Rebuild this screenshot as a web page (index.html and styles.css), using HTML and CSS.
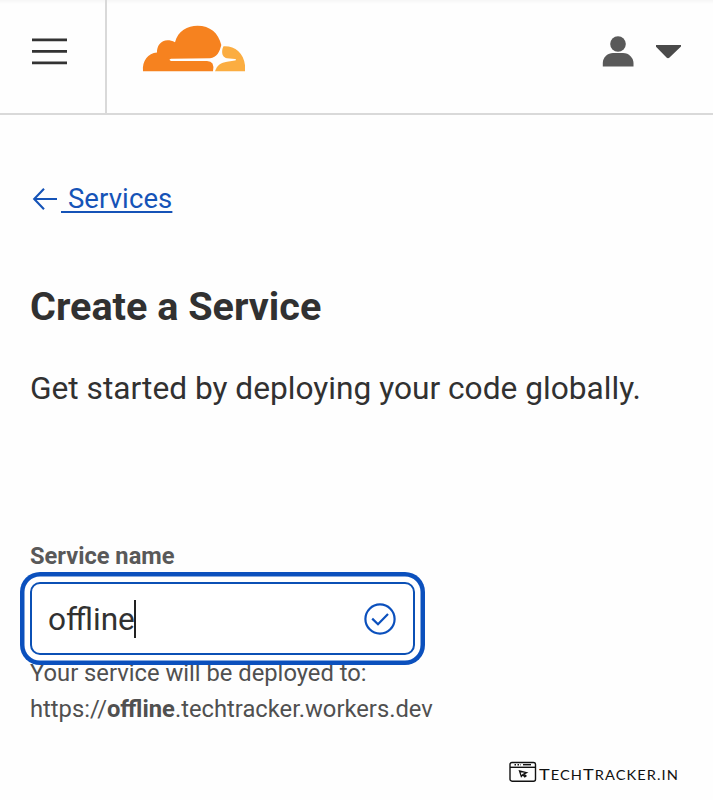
FILE: index.html
```html
<!DOCTYPE html>
<html lang="en">
<head>
<meta charset="utf-8">
<title>Create a Service</title>
<link rel="stylesheet" href="styles.css">
</head>
<body>
<header class="topbar">
  <div class="menu"><svg width="36" height="28" viewBox="0 0 36 28" stroke="#333" stroke-width="2.700"><path d="M0 1.900H35M0 13.300H35M0 24.900H35"/></svg></div>
  <svg class="logo" width="103" height="47" viewBox="142 25 103 47">
    <path fill="#f6821f" d="M143 71.300C142 61 148 53 157 52.500C156.500 44 164 36.500 175 42.200C178 31 187.500 25.800 197.500 25.800C210 25.800 218.500 33 221.300 45C219.500 52 217 57.500 210 58.200L171 58.800Q168 59.700 171 60.900L207 61Q215 61 213 71.300Z"/>
    <path fill="#fbad41" d="M223.500 46.300C236 45.500 246.500 55 245 71.300H215C217 65 221 62.500 227 61.700L235 60.500Q237 59.700 235 59L227 58.300C221 57 221.500 50 223.500 46.300Z"/>
  </svg>
  <div class="account">
    <svg width="32" height="31" viewBox="602 36 32 31"><circle cx="618" cy="44" r="7.800" fill="#595959"/><path fill="#595959" d="M602.800 66.500V63C602.800 57 608 53 613 53H623C629 53 633.500 58 633.500 63V66.500Z"/></svg>
    <svg width="26" height="14" viewBox="655 45 26 14"><path fill="#4a4a4a" d="M656 45H681V46.500L669.500 57.500Q668 59 666.500 57.500L656 46.800Z"/></svg>
  </div>
</header>
<main>
  <a class="back"><svg width="26" height="24" viewBox="0 0 26 24" fill="none" stroke="#1553b7" stroke-width="2.100"><path d="M25 12H2M12 1.700L2.200 12L12 22.300"/></svg><span class="back-text">&nbsp;Services</span></a>
  <h1><span>Create a Service</span></h1>
  <p class="intro"><span>Get started by deploying your code globally.</span></p>
  <div class="label"><span>Service name</span></div>
  <div class="field">
    <span class="value">offline</span><i class="caret"></i>
    <svg class="check" width="32" height="32" viewBox="0 0 32 32" fill="none" stroke="#0b50bd" stroke-width="2.200"><circle cx="16" cy="16" r="14.600"/><path d="M8.200 15.600L14 21.300L24 11"/></svg>
  </div>
  <div class="hint"><span>Your service will be deployed to:</span></div>
  <div class="hint"><span>https://<b>offline</b>.techtracker.workers.dev</span></div>
</main>
<footer>
  <svg width="28" height="22" viewBox="0 0 28 22" fill="none" stroke="#111" stroke-width="1.400"><rect x="1" y="1.500" width="25.500" height="18.700" rx="2"/><path d="M1 6.300H26.500"/><path d="M5.500 3.700H12" stroke-dasharray="1.500 1.500"/><path d="M14 3.700H22"/><path d="M10.500 10L17.500 11.700L15 12.900L17 15L15.800 15.800L13.800 13.800L12.300 15.500Z" stroke-width="1.300"/></svg>
  <span class="brand">T<small>ECH</small>T<small>RACKER.IN</small></span>
</footer>
</body>
</html>
```
FILE: styles.css
```css
* { box-sizing: border-box; }
body { margin: 0; width: 713px; height: 800px; overflow: hidden; background: #fefefe; color: #313131; font-family: Roboto, "Liberation Sans", sans-serif; display: flex; flex-direction: column; }
.topbar { height: 115px; flex: none; display: flex; align-items: flex-start; border-bottom: 2px solid #d9d9d9; background: linear-gradient(#f6f6f6, #fefefe 4px); }
.menu { width: 107px; height: 113px; border-right: 2px solid #d9d9d9; padding: 38px 0 0 32px; }
.logo { margin: 25px 0 0 35px; }
.account { margin: 36px 32px 0 auto; display: flex; gap: 21px; }
.account svg:last-child { margin-top: 9px; }
main { padding-left: 30px; display: flex; flex-direction: column; align-items: flex-start; }
main span { white-space: nowrap; }
.back { display: flex; align-items: center; margin-top: 66px; padding-left: 2px; height: 36px; color: #1553b7; font-size: 27.500px; line-height: 36px; letter-spacing: .1px; }
.back-text { margin-left: 3px; text-decoration: underline; text-decoration-thickness: 2px; text-underline-offset: 3px; }
h1 { margin: 65px 0 0; font-size: 39.600px; line-height: 50px; font-weight: 700; }
.intro { margin: 37px 0 0; font-size: 31.680px; line-height: 40px; }
.label { margin-top: 131px; height: 42px; font-size: 23.650px; line-height: 32px; font-weight: 700; color: #595959; }
.field { position: relative; z-index: 1; width: 385px; height: 73px; display: flex; align-items: center; padding: 0 17px 0 16px; border: 2px solid #0b50b5; border-radius: 10px; background: #fff; box-shadow: 0 0 0 5.500px #fff, 0 0 0 10px #0b50bd; }
.value { margin-top: 2px; font-size: 31.600px; line-height: 40px; }
.caret { width: 2px; height: 38px; margin-left: -1px; background: #222; }
.check { margin-left: auto; }
.hint { font-size: 23.750px; line-height: 36px; color: #505050; }
footer { margin: auto 0 17px 509px; height: 22px; display: flex; align-items: center; }
.brand { margin: 5px 0 0 2px; color: #111; font: 15.500px/22px Lato, sans-serif; letter-spacing: .9px; white-space: nowrap; transform: scaleX(1.17); transform-origin: left; }
.brand small { font-size: 12.500px; }
```
